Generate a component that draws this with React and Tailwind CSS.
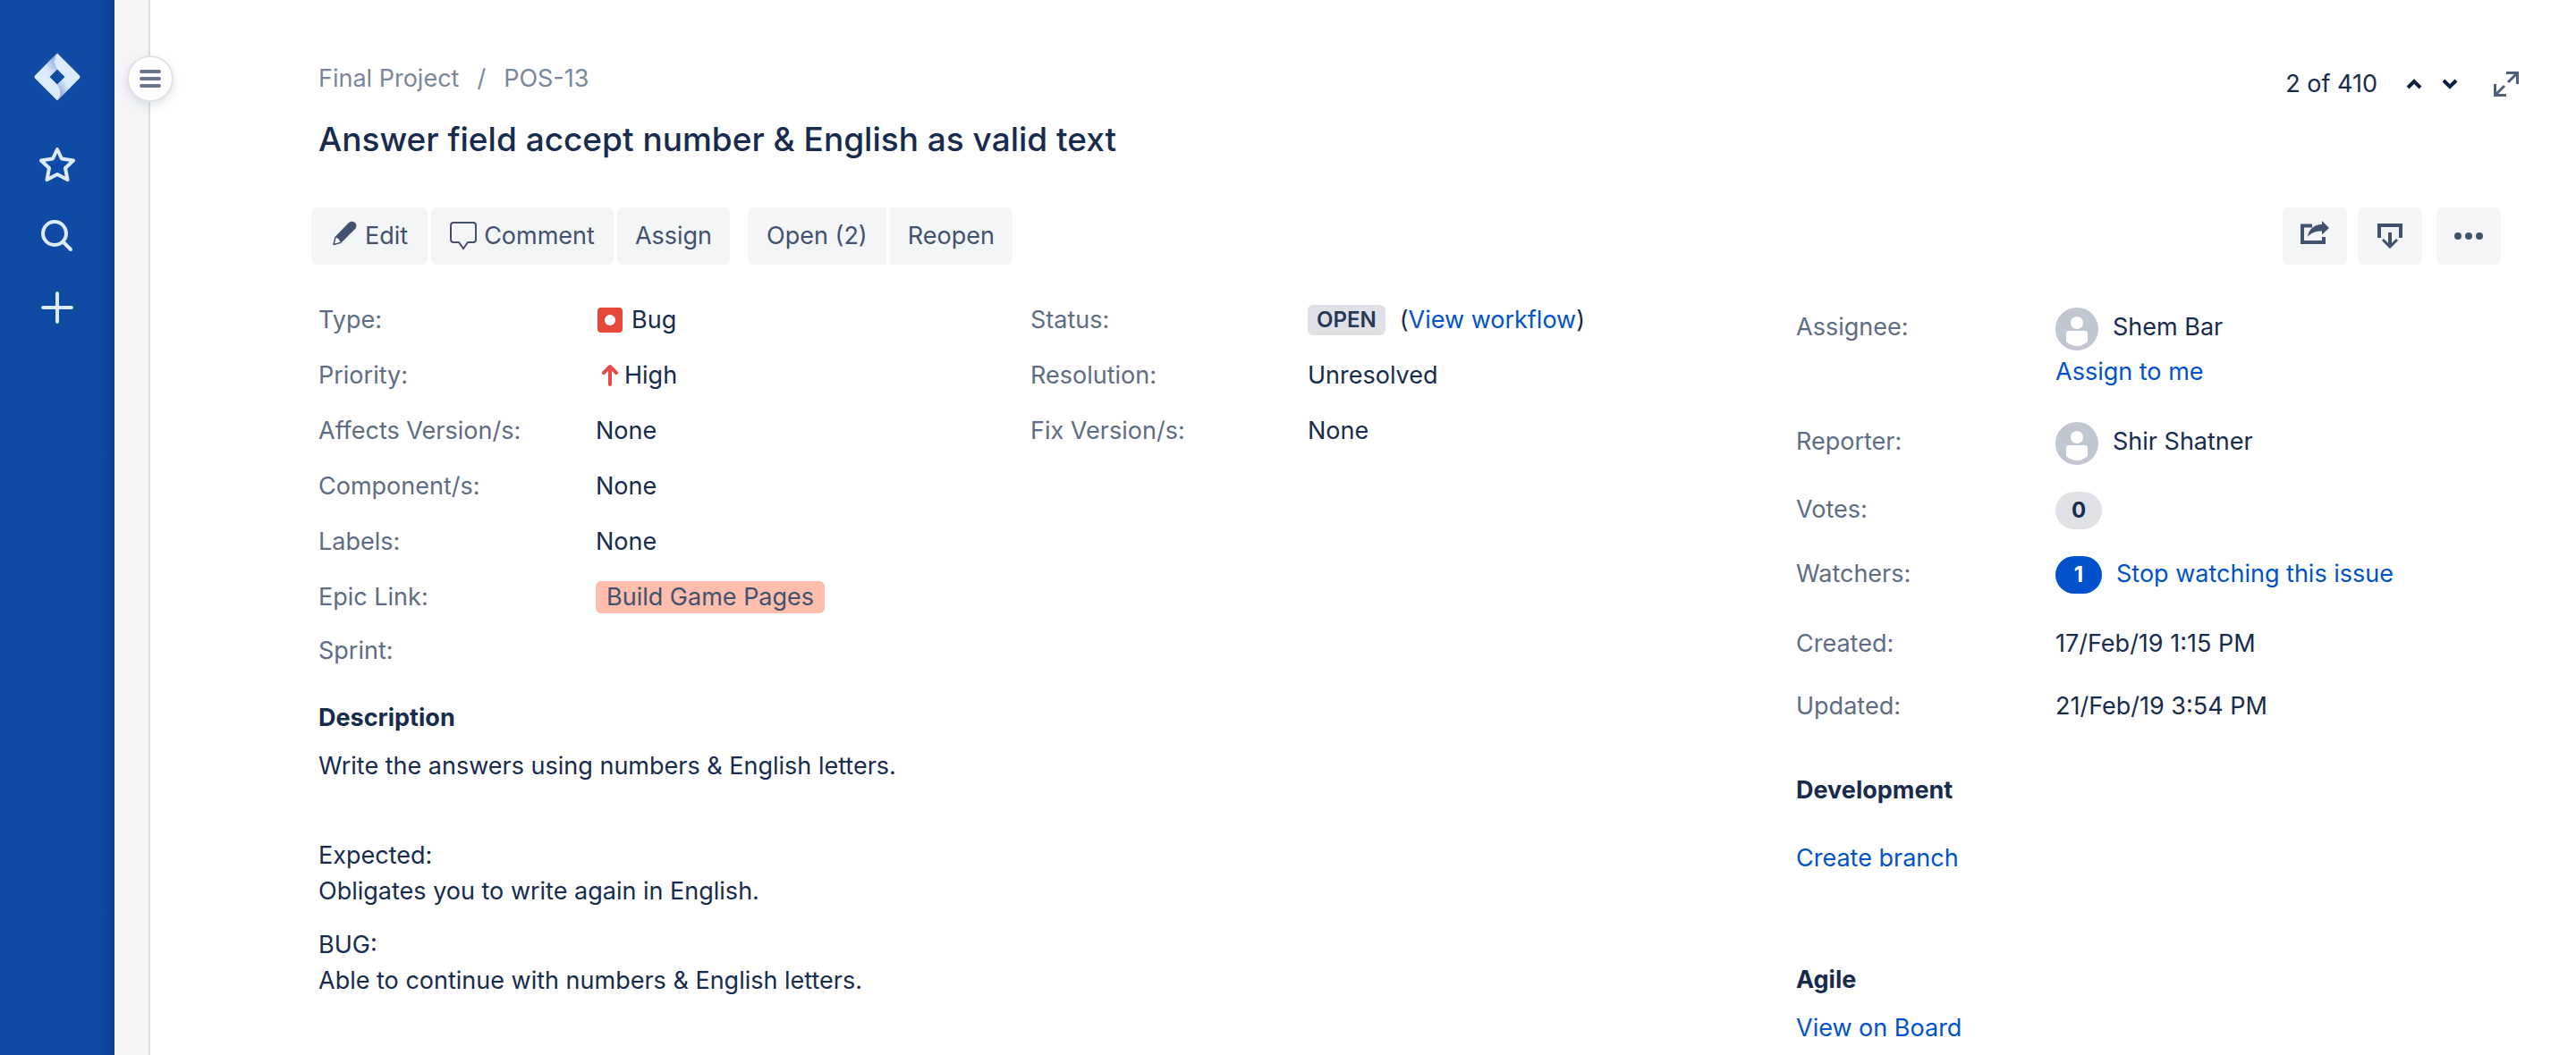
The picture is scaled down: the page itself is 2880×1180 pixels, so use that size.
function Logo() {
  return (
    <svg width="52" height="54" viewBox="0 0 52 54" aria-hidden="true">
      <defs>
        <linearGradient id="fold-a" x1="25" y1="10" x2="14" y2="19" gradientUnits="userSpaceOnUse">
          <stop offset="0" stopColor="#8fb0e0" />
          <stop offset="1" stopColor="#deebff" />
        </linearGradient>
        <linearGradient id="fold-b" x1="27" y1="44" x2="38" y2="35" gradientUnits="userSpaceOnUse">
          <stop offset="0" stopColor="#8fb0e0" />
          <stop offset="1" stopColor="#deebff" />
        </linearGradient>
      </defs>
      <path d="M26 0.500 C22 7 22 13 26 18.500 L17.500 27 L26 35.500 C31 42 31 48 26 53.500 L1 28.500 Q0 27 1 25.500 Z" fill="#deebff" />
      <path d="M26 0.500 L51 25.500 Q52 27 51 28.500 L26 53.500 C31 48 31 42 26 35.500 L34.500 27 L26 18.500 C22 13 22 7 26 0.500 Z" fill="#deebff" />
      <path d="M25 1.500 L11.500 15 L18 26 L26 18.500 C22 14 21 8 25 1.500 Z" fill="url(#fold-a)" />
      <path d="M27 52.500 L40.500 39 L34 28 L26 35.500 C30 40 31 46 27 52.500 Z" fill="url(#fold-b)" />
    </svg>
  );
}

function Star() {
  return (
    <svg width="40" height="40" viewBox="0 0 40 40" fill="none" stroke="#deebff" strokeWidth="4" strokeLinejoin="round" aria-hidden="true">
      <path d="M20 3 L25 13.500 L38 15.500 L29 24 L31.500 37 L20 31 L8.500 37 L11 24 L2 15.500 L15 13.500 Z" />
    </svg>
  );
}

function Search() {
  return (
    <svg width="40" height="40" viewBox="0 0 40 40" fill="none" stroke="#deebff" strokeWidth="4" strokeLinecap="round" aria-hidden="true">
      <circle cx="17" cy="17" r="13" />
      <path d="M27 27 L35 35" />
    </svg>
  );
}

function Plus() {
  return (
    <svg width="40" height="40" viewBox="0 0 40 40" fill="none" stroke="#deebff" strokeWidth="4" strokeLinecap="round" aria-hidden="true">
      <path d="M20 4 V36 M4 20 H36" />
    </svg>
  );
}

function Pencil() {
  return (
    <svg className="mb-1.5" width="28" height="28" viewBox="0 0 28 28" fill="#42526e" aria-hidden="true">
      <path d="M17.500 2.500 C20 0 23 0.300 25 2.200 C27 4.200 27 7 24.800 9.300 L9.500 24.500 L3 17.500 Z" />
      <path d="M3.200 17.800 L1 26.500 L9.300 24.300" fill="none" stroke="#42526e" strokeWidth="1.5" strokeLinejoin="round" />
      <path d="M3.800 19.500 L6.500 20 L8 23.500 L2.500 25 Z" fill="#f4f5f7" />
    </svg>
  );
}

function Bubble() {
  return (
    <svg width="30" height="32" viewBox="0 0 30 32" fill="none" stroke="#42526e" strokeWidth="2" aria-hidden="true">
      <path d="M4 1 H26 Q29 1 29 4 V20 Q29 23 26 23 H20 L15 30 L10 23 H4 Q1 23 1 20 V4 Q1 1 4 1 Z" />
    </svg>
  );
}

function Avatar() {
  return (
    <svg width="48" height="48" viewBox="0 0 48 48" aria-hidden="true">
      <circle cx="24" cy="24" r="24" fill="#c1c7d0" />
      <circle cx="24" cy="17" r="7" fill="#fff" />
      <path d="M12 29 Q12 26 15 26 H33 Q36 26 36 29 V38 Q31 43 24 43 Q17 43 12 38 Z" fill="#fff" />
    </svg>
  );
}

function ToolButton({ children, className }) {
  return (
    <button type="button" className={`flex h-16 items-center justify-center bg-[#f4f5f7] text-[#42526e] ${className}`}>
      {children}
    </button>
  );
}

function Field({ label, children, className = "h-[62px]" }) {
  return (
    <div className={`flex items-center ${className}`}>
      <dt className="w-[310px] shrink-0 text-[#5e6c84]">{label}</dt>
      <dd className="flex items-center">{children}</dd>
    </div>
  );
}

function Person({ label, name, children }) {
  return (
    <div className="flex">
      <dt className="w-[290px] shrink-0 pt-0.5 text-[#5e6c84]">{label}</dt>
      <dd className="flex flex-col">
        <span className="flex h-12 items-center gap-4">
          <Avatar />
          <span className="pb-1">{name}</span>
        </span>
        {children}
      </dd>
    </div>
  );
}

function SideField({ label, children }) {
  return (
    <div className="flex items-center">
      <dt className="w-[290px] shrink-0 pb-0.5 text-[#5e6c84]">{label}</dt>
      <dd className="flex items-center gap-4">{children}</dd>
    </div>
  );
}

export default function App() {
  return (
    <div className="flex min-h-screen bg-white font-[Inter,'Liberation_Sans',sans-serif] text-[27px] leading-10 text-[#172b4d]">
      <nav aria-label="Global" className="flex w-32 shrink-0 flex-col items-center bg-[linear-gradient(to_left,#0b3f8c,#0f4ba5_20px)] pt-[59px]">
        <a href="#home" aria-label="Home"><Logo /></a>
        <button type="button" aria-label="Starred" className="mt-[51px]"><Star /></button>
        <button type="button" aria-label="Search" className="mt-10"><Search /></button>
        <button type="button" aria-label="Create" className="mt-10"><Plus /></button>
      </nav>
      <div className="relative w-10 shrink-0 border-r-2 border-[#dcdddf] bg-[#f4f5f7]">
        <button type="button" aria-label="Toggle sidebar" className="absolute -right-7 top-[62px] flex size-[52px] flex-col items-center justify-center gap-1 rounded-full border-2 border-[#e1e3e8] bg-white shadow-[0_4px_10px_rgba(9,30,66,0.12)]">
          <span className="h-1 w-6 rounded-full bg-[#6b778c]" />
          <span className="h-1 w-6 rounded-full bg-[#6b778c]" />
          <span className="h-1 w-6 rounded-full bg-[#6b778c]" />
        </button>
      </div>

      <main className="min-w-0 flex-1 pl-[180px]">
        <header className="flex justify-between pt-[68px] pr-16">
          <div className="pl-2">
            <div className="flex gap-5 text-[#7a869a]">
              <a href="#project">Final Project</a>
              <span>/</span>
              <a href="#issue">POS-13</a>
            </div>
            <h1 className="mt-6 text-[37px] leading-[48px] font-medium">Answer field accept number &amp; English as valid text</h1>
          </div>
          <div className="flex h-10 items-center pt-3">
            <span>2 of 410</span>
            <button type="button" aria-label="Previous issue" className="ml-8">
              <svg width="18" height="14" viewBox="0 0 18 14" fill="none" stroke="#091e42" strokeWidth="4"><path d="M2 11 L9 4 L16 11" /></svg>
            </button>
            <button type="button" aria-label="Next issue" className="ml-[22px]">
              <svg width="18" height="14" viewBox="0 0 18 14" fill="none" stroke="#091e42" strokeWidth="4"><path d="M2 3 L9 10 L16 3" /></svg>
            </button>
            <button type="button" aria-label="Full screen" className="ml-10">
              <svg width="28" height="28" viewBox="0 0 28 28" fill="none" stroke="#505f79" strokeWidth="3"><path d="M14 1.500 H26.500 V14 M26 2 L16 12 M1.500 14 V26.500 H14 M2 26 L12 16" /></svg>
            </button>
          </div>
        </header>

        <div className="mt-[52px] flex justify-between pr-[84px]">
          <div className="flex gap-1">
            <ToolButton className="gap-2 rounded-md pr-[22px] pl-6"><Pencil />Edit</ToolButton>
            <ToolButton className="gap-2 rounded-md px-[21px]"><Bubble />Comment</ToolButton>
            <ToolButton className="mr-4 rounded-md px-5">Assign</ToolButton>
            <ToolButton className="rounded-l-md px-[21px]">Open (2)</ToolButton>
            <ToolButton className="rounded-r-md px-5">Reopen</ToolButton>
          </div>
          <div className="flex">
            <button type="button" aria-label="Share" className="mr-3 flex h-16 w-[72px] items-center justify-center rounded-md bg-[#f4f5f7]">
              <svg className="mb-1.5" width="32" height="28" viewBox="0 0 32 28" aria-hidden="true">
                <path d="M13 5.500 H2 V24 H26 V18" fill="none" stroke="#42526e" strokeWidth="4" />
                <path d="M24 0 L32 8 L24 15.500 V11.500 C17 11.500 12 13 8 18 C9 9 16 4 24 4 Z" fill="#42526e" />
              </svg>
            </button>
            <button type="button" aria-label="Export" className="mr-4 flex h-16 w-[72px] items-center justify-center rounded-md bg-[#f4f5f7]">
              <svg width="28" height="28" viewBox="0 0 28 28" fill="none" stroke="#42526e" strokeWidth="4" aria-hidden="true">
                <path d="M2 16 V2 H26 V16 M14 10 V25" />
                <path d="M6 18 L14 26 L22 18" strokeWidth="3" />
              </svg>
            </button>
            <button type="button" aria-label="More" className="flex h-16 w-[72px] items-center justify-center gap-1 rounded-md bg-[#f4f5f7]">
              <span className="size-2 rounded-full bg-[#42526e]" />
              <span className="size-2 rounded-full bg-[#42526e]" />
              <span className="size-2 rounded-full bg-[#42526e]" />
            </button>
          </div>
        </div>

        <div className="flex justify-between pl-2">
          <div className="min-w-0 flex-1 pt-[31px]">
            <div className="flex">
              <dl className="w-[796px]">
                <Field label="Type:">
                  <span className="mr-2.5 ml-0.5 flex size-7 items-center justify-center rounded-sm bg-[#e5493a]"><span className="size-3 rounded-full bg-white" /></span>
                  Bug
                </Field>
                <Field label="Priority:">
                  <svg className="mr-1" width="28" height="28" viewBox="0 0 28 28" fill="none" stroke="#e9494a" strokeWidth="4" strokeLinecap="round" strokeLinejoin="round" aria-hidden="true">
                    <path d="M16 24 V4 M9 11 L16 4 L23 11" />
                  </svg>
                  High
                </Field>
                <Field label="Affects Version/s:">None</Field>
                <Field label="Component/s:">None</Field>
                <Field label="Labels:">None</Field>
                <Field label="Epic Link:">
                  <a href="#epic" className="rounded-md bg-[#ffbdad] px-3 leading-9 text-[#42526e]">Build Game Pages</a>
                </Field>
                <Field label="Sprint:" className="h-[58px]" />
              </dl>
              <dl>
                <Field label="Status:">
                  <span className="mr-4 rounded-md bg-[#dfe1e6] px-2.5 text-2xl leading-[34px] font-semibold text-[#253858]">OPEN</span>
                  (<a href="#workflow" className="text-[#0052cc]">View workflow</a>)
                </Field>
                <Field label="Resolution:">Unresolved</Field>
                <Field label="Fix Version/s:">None</Field>
              </dl>
            </div>
            <section className="pt-[26px]">
              <h2 className="font-bold">Description</h2>
              <p className="mt-3.5">Write the answers using numbers &amp; English letters.</p>
              <p className="mt-[60px]">Expected:<br />Obligates you to write again in English.</p>
              <p className="mt-5">BUG:<br />Able to continue with numbers &amp; English letters.</p>
            </section>
          </div>

          <aside className="w-[872px] shrink-0 pt-12">
            <dl className="flex flex-col">
              <Person label="Assignee:" name="Shem Bar">
                <a href="#assign" className="mt-1 text-[#0052cc]">Assign to me</a>
              </Person>
              <div className="mt-9"><Person label="Reporter:" name="Shir Shatner" /></div>
              <div className="mt-[30px]">
                <SideField label="Votes:">
                  <span className="flex h-[42px] w-[52px] items-center justify-center rounded-full bg-[#dfe1e6] text-2xl font-bold">0</span>
                </SideField>
              </div>
              <div className="mt-[30px]">
                <SideField label="Watchers:">
                  <span className="flex h-[42px] w-[52px] items-center justify-center rounded-full bg-[#0052cc] text-2xl font-bold text-white">1</span>
                  <a href="#watch" className="pb-0.5 text-[#0052cc]">Stop watching this issue</a>
                </SideField>
              </div>
              <div className="mt-9"><SideField label="Created:"><span className="pb-0.5">17/Feb/19 1:15 PM</span></SideField></div>
              <div className="mt-7"><SideField label="Updated:"><span className="pb-0.5">21/Feb/19 3:54 PM</span></SideField></div>
            </dl>
            <h2 className="mt-[52px] font-bold">Development</h2>
            <a href="#branch" className="mt-9 block text-[#0052cc]">Create branch</a>
            <h2 className="mt-24 font-bold">Agile</h2>
            <a href="#board" className="mt-3.5 block text-[#0052cc]">View on Board</a>
          </aside>
        </div>
      </main>
    </div>
  );
}
